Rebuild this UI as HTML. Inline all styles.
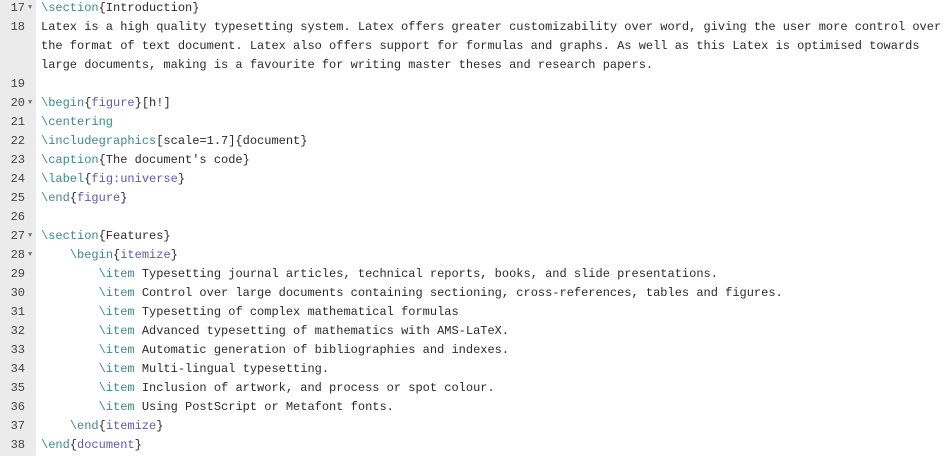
<!DOCTYPE html>
<html><head><style>
body{margin:0;width:952px;height:456px;background:#fff;overflow:hidden;font-family:"Liberation Mono",monospace;font-size:12px;}
.g{position:absolute;left:0;top:0;width:36px;height:456px;background:#ebebeb;}
.w{position:absolute;left:0;top:-1px;}
.r{height:19px;line-height:19px;position:relative;white-space:pre;}
.n{position:absolute;left:0;width:25px;text-align:right;color:#444;}
.f{position:absolute;left:28px;top:0;font-size:7px;color:#777;}
.t{position:absolute;left:41px;color:#2a2a2a;}
.c{color:#3b8a8a}.a{color:#5b5bb0}
</style></head><body>
<div class="g"></div>
<div class="w">
<div class="r"><span class="n">17</span><span class="f">▼</span><span class="t"><span class="c">\section</span>{Introduction}</span></div>
<div class="r"><span class="n">18</span><span class="t">Latex is a high quality typesetting system. Latex offers greater customizability over word, giving the user more control over</span></div>
<div class="r"><span class="t">the format of text document. Latex also offers support for formulas and graphs. As well as this Latex is optimised towards</span></div>
<div class="r"><span class="t">large documents, making is a favourite for writing master theses and research papers.</span></div>
<div class="r"><span class="n">19</span></div>
<div class="r"><span class="n">20</span><span class="f">▼</span><span class="t"><span class="c">\begin</span>{<span class="a">figure</span>}[h!]</span></div>
<div class="r"><span class="n">21</span><span class="t"><span class="c">\centering</span></span></div>
<div class="r"><span class="n">22</span><span class="t"><span class="c">\includegraphics</span>[scale=1.7]{document}</span></div>
<div class="r"><span class="n">23</span><span class="t"><span class="c">\caption</span>{The document's code}</span></div>
<div class="r"><span class="n">24</span><span class="t"><span class="c">\label</span>{<span class="a">fig:universe</span>}</span></div>
<div class="r"><span class="n">25</span><span class="t"><span class="c">\end</span>{<span class="a">figure</span>}</span></div>
<div class="r"><span class="n">26</span></div>
<div class="r"><span class="n">27</span><span class="f">▼</span><span class="t"><span class="c">\section</span>{Features}</span></div>
<div class="r"><span class="n">28</span><span class="f">▼</span><span class="t">    <span class="c">\begin</span>{<span class="a">itemize</span>}</span></div>
<div class="r"><span class="n">29</span><span class="t">        <span class="c">\item</span> Typesetting journal articles, technical reports, books, and slide presentations.</span></div>
<div class="r"><span class="n">30</span><span class="t">        <span class="c">\item</span> Control over large documents containing sectioning, cross-references, tables and figures.</span></div>
<div class="r"><span class="n">31</span><span class="t">        <span class="c">\item</span> Typesetting of complex mathematical formulas</span></div>
<div class="r"><span class="n">32</span><span class="t">        <span class="c">\item</span> Advanced typesetting of mathematics with AMS-LaTeX.</span></div>
<div class="r"><span class="n">33</span><span class="t">        <span class="c">\item</span> Automatic generation of bibliographies and indexes.</span></div>
<div class="r"><span class="n">34</span><span class="t">        <span class="c">\item</span> Multi-lingual typesetting.</span></div>
<div class="r"><span class="n">35</span><span class="t">        <span class="c">\item</span> Inclusion of artwork, and process or spot colour.</span></div>
<div class="r"><span class="n">36</span><span class="t">        <span class="c">\item</span> Using PostScript or Metafont fonts.</span></div>
<div class="r"><span class="n">37</span><span class="t">    <span class="c">\end</span>{<span class="a">itemize</span>}</span></div>
<div class="r"><span class="n">38</span><span class="t"><span class="c">\end</span>{<span class="a">document</span>}</span></div>
</div>
</body></html>
